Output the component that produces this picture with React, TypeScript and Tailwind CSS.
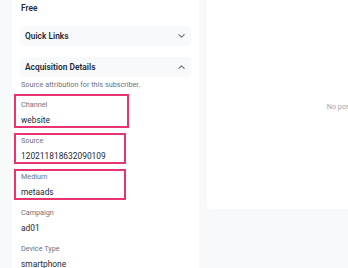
type Field = {
  label: string;
  value: string;
  mark?: string;
};

const fields: Field[] = [
  { label: "Channel", value: "website", mark: "-top-[5px] w-[115px]" },
  { label: "Source", value: "120211818632090109", mark: "-top-[2px] w-[112px]" },
  { label: "Medium", value: "metaads", mark: "-top-[2px] w-[112px]" },
  { label: "Campaign", value: "ad01" },
  { label: "Device Type", value: "smartphone" },
];

function Chevron({ up }: { up?: boolean }) {
  return (
    <svg width="7" height="4" viewBox="0 0 7 4" fill="none" className="text-[#6b7280]">
      <path
        d={up ? "M0.8 3.4 L3.5 0.8 L6.2 3.4" : "M0.8 0.6 L3.5 3.2 L6.2 0.6"}
        stroke="currentColor"
        strokeWidth="1.1"
        strokeLinecap="round"
        strokeLinejoin="round"
      />
    </svg>
  );
}

function SectionToggle({ title, open }: { title: string; open?: boolean }) {
  return (
    <div className="flex h-5 items-center justify-between rounded-[4px] bg-[#f8f9fb] pl-[5px] pr-[6px]">
      <span className="text-[8.4px] font-semibold text-[#1f2937]">{title}</span>
      <Chevron up={open} />
    </div>
  );
}

export default function App() {
  return (
    <div
      className="flex h-[268px] w-[348px] overflow-hidden bg-[#f8f9fb]"
      style={{ fontFamily: "Roboto, 'Liberation Sans', sans-serif" }}
    >
      <div className="w-3 shrink-0" />

      <aside className="w-[187px] shrink-0 bg-white px-2">
        <div className="flex h-4 items-center px-[1px] text-[8.4px] font-semibold text-[#1f2937]">
          Free
        </div>

        <div className="mt-[10px]">
          <SectionToggle title="Quick Links" />
        </div>

        <div className="mt-[11px]">
          <SectionToggle title="Acquisition Details" open />
        </div>

        <p className="mt-[2px] px-[1px] text-[7.25px] leading-[12px] text-[#6b7280]">
          Source attribution for this subscriber.
        </p>

        <div className="mt-[8px] flex flex-col gap-[9px] px-[1px]">
          {fields.map((f) => (
            <div key={f.label} className="relative">
              <div className="text-[7.25px] leading-[12px] text-[#6b7280]">{f.label}</div>
              <div className="mt-[3px] text-[8.4px] leading-[12px] text-[#1f2937]">
                {f.value}
              </div>
              {f.mark && (
                <span
                  className={`pointer-events-none absolute -left-[7px] -bottom-[2px] border-2 border-[#e9346d] ${f.mark}`}
                />
              )}
            </div>
          ))}
        </div>
      </aside>

      <div className="w-2 shrink-0" />

      <main className="flex h-[209px] w-[280px] shrink-0 items-center justify-center rounded-bl-[4px] bg-white">
        <span className="pt-[6px] text-[7.25px] text-[#9ca3af]">No posts yet</span>
      </main>
    </div>
  );
}
